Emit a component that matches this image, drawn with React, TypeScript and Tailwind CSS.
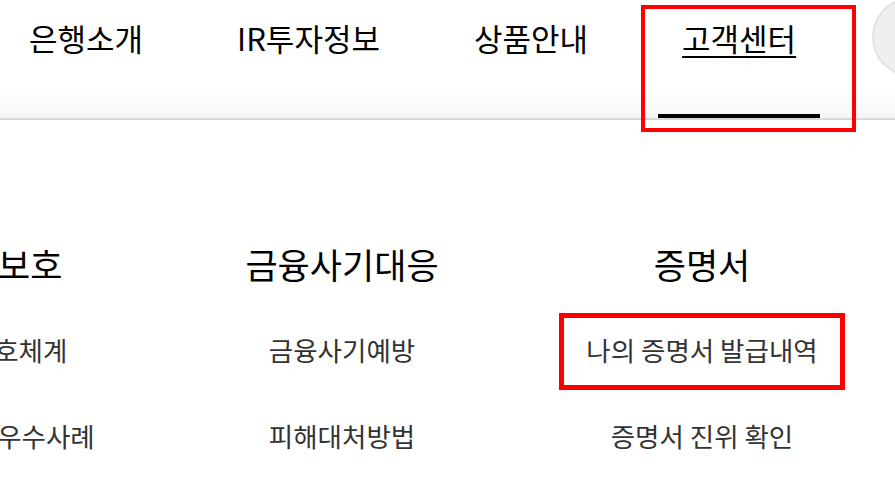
import React from "react";

const FONT = { fontFamily: '"Noto Sans CJK KR", "Noto Sans", sans-serif' };

const navItems = [
  { label: "은행소개", active: false },
  { label: "IR투자정보", active: false },
  { label: "상품안내", active: false },
  { label: "고객센터", active: true },
];

const columns = [
  { title: "소비자보호", items: ["소비자보호체계", "소비자보호 우수사례"] },
  { title: "금융사기대응", items: ["금융사기예방", "피해대처방법"] },
  { title: "증명서", items: ["나의 증명서 발급내역", "증명서 진위 확인"], boxed: 0 },
];

export default function App() {
  return (
    <div className="w-[895px] h-[501px] overflow-hidden bg-white" style={FONT}>
      <header className="h-[120px] border-b-2 border-[#d9d9d9] bg-gradient-to-b from-white from-75% to-[#f6f6f6]">
        <div className="flex h-[118px] items-start pl-[5px]">
          <nav className="flex h-full gap-[46px]">
            {navItems.map((n) => (
              <div key={n.label} className="relative flex h-full flex-col">
                <span
                  className={
                    "px-6 pt-[18px] text-[31px] leading-[40px] font-normal text-black whitespace-nowrap " +
                    (n.active ? "underline decoration-2 underline-offset-[5px]" : "")
                  }
                >
                  {n.label}
                </span>
                {n.active && (
                  <>
                    <div className="mt-auto h-[4px] w-full bg-black" />
                    <div className="pointer-events-none absolute top-[5px] bottom-[-14px] left-[-17px] right-[-36px] border-4 border-[#ff0000]" />
                  </>
                )}
              </div>
            ))}
          </nav>
          <div className="ml-[52px] -mt-[3px] h-[80px] w-[80px] shrink-0 rounded-full border-2 border-[#e2e2e2] bg-[#efefef]" />
        </div>
      </header>

      <section className="ml-[-198px] flex pt-[121px]">
        {columns.map((c) => (
          <div key={c.title} className="flex w-[360px] shrink-0 flex-col items-center">
            <h2 className="text-[35px] leading-[46px] font-normal text-black whitespace-nowrap">
              {c.title}
            </h2>
            <ul className="mt-[45px] flex flex-col items-center gap-[51px]">
              {c.items.map((it, i) => (
                <li
                  key={it}
                  className="relative text-[26.5px] leading-[35px] text-[#333] whitespace-nowrap"
                >
                  {it}
                  {c.boxed === i && (
                    <div className="pointer-events-none absolute top-[-19px] bottom-[-23px] left-[-27px] right-[-27px] border-[5px] border-[#ff0000]" />
                  )}
                </li>
              ))}
            </ul>
          </div>
        ))}
      </section>
    </div>
  );
}
